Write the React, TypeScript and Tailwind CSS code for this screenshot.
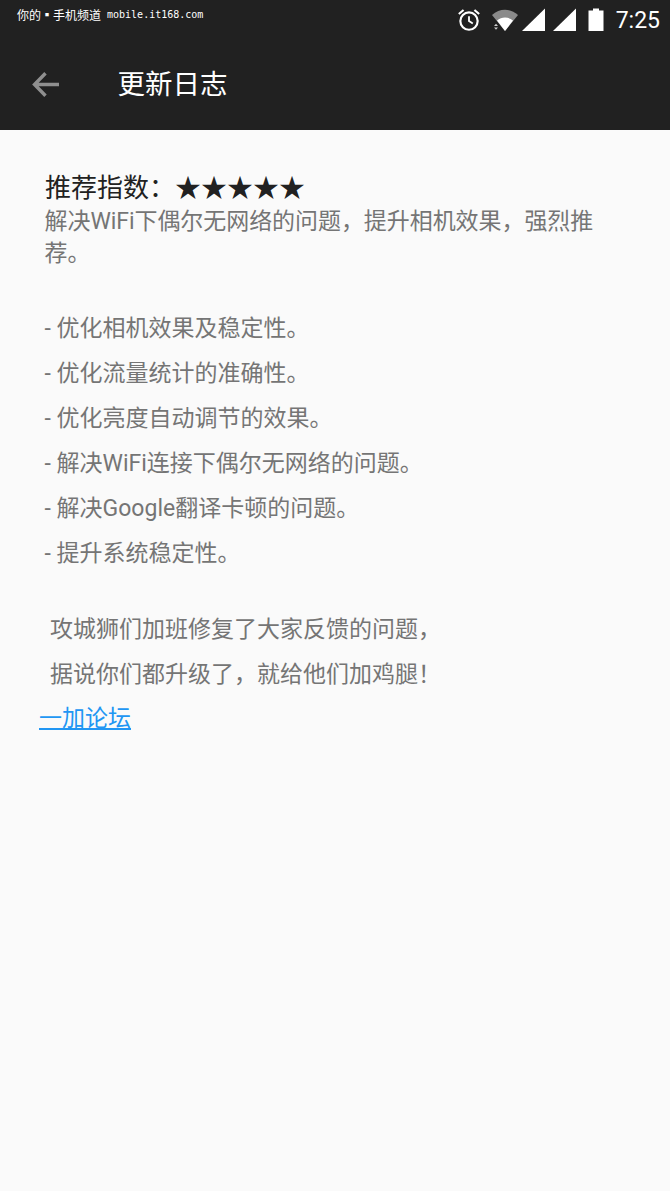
import React from "react";

const cjk = "font-['Roboto','Noto_Sans_CJK_SC',sans-serif]";

function Row({ children, cls }: { children: React.ReactNode; cls?: string }) {
  return <p className={`h-[45px] leading-[45px] whitespace-pre ${cls ?? ""}`}>{children}</p>;
}

export default function App() {
  return (
    <div className={`w-[670px] h-[1191px] bg-[#fafafa] flex flex-col overflow-hidden ${cjk}`}>
      <header className="h-[130px] bg-[#212121] shrink-0 flex flex-col">
        <div className="h-[40px] flex items-start justify-between">
          <div className="pl-[17px] pt-[6px] flex items-center h-[16px] mt-[4px] text-white text-[12px] leading-none whitespace-pre">
            <span className="font-['Noto_Sans_CJK_SC',sans-serif]">你的▪手机频道</span>
            <span className="ml-[6px] font-['DejaVu_Sans_Mono',monospace] text-[10px]">mobile.it168.com</span>
          </div>
          <div className="flex items-center h-[40px] text-white">
            <svg width="26" height="26" viewBox="0 0 24 24" fill="none" stroke="#fff" strokeWidth="2" className="mr-[9px]">
              <circle cx="12" cy="13" r="8" />
              <path d="M12 8.500V13l3.500 2.200" strokeWidth="1.700" />
              <path d="M2.600 6.500 7 2.800M21.400 6.500 17 2.800" strokeWidth="2" />
            </svg>
            <svg width="28" height="24" viewBox="0 0 28 24" className="mr-[2px]">
              <path d="M1 7C8.500 0 19.500 0 27 7L14 23Z" fill="#8a8a8a" />
              <path d="M6 12.500c4.700-4 11.300-4 16 0L14 23Z" fill="#fff" />
              <path d="M3 18 5 15.800 7 18ZM3 19.500H7L5 21.800Z" fill="#ccc" />
            </svg>
            <svg width="25" height="24" viewBox="0 0 25 24" className="mr-[6px]">
              <path d="M24 0.500V23H1Z" fill="#fff" />
            </svg>
            <svg width="25" height="24" viewBox="0 0 25 24" className="mr-[11px]">
              <path d="M24 0.500V23H1Z" fill="#fff" />
            </svg>
            <svg width="16" height="24" viewBox="0 0 16 24" className="mr-[12px]">
              <path d="M5 0.500H11V2.500H15.500V23H.5V2.500H5Z" fill="#fff" />
            </svg>
            <span className="text-[23px] leading-none mr-[10px] font-['Roboto',sans-serif] font-normal">7:25</span>
          </div>
        </div>
        <div className="flex-1 flex items-center">
          <svg width="27" height="25" viewBox="0 0 27 25" fill="none" stroke="#8f8f8f" strokeWidth="3.400" className="ml-[32px] mb-[1px]">
            <path d="M27 12.500H2.500M13.500 1.200 2.500 12.500l11 11.300" />
          </svg>
          <h1 className="ml-[58.500px] text-[27.500px] leading-none text-white font-normal mb-[1px]">更新日志</h1>
        </div>
      </header>
      <main className="flex-1 text-[23px] text-[#757575]">
        <div className="pl-[45px] pr-[60px] pt-[42px]">
          <h2 className="text-[26px] leading-[32px] text-[#212121] font-normal whitespace-pre">推荐指数：★★★★★</h2>
          <p className="leading-[32px] mt-[2px] -ml-[0.500px] tracking-[-0.060px]">解决WiFi下偶尔无网络的问题，提升相机效果，强烈推荐。</p>
        </div>
        <div className="pl-[44.500px] mt-[36px]">
          <Row>- 优化相机效果及稳定性。</Row>
          <Row>- 优化流量统计的准确性。</Row>
          <Row>- 优化亮度自动调节的效果。</Row>
          <Row>- 解决WiFi连接下偶尔无网络的问题。</Row>
          <Row>- 解决Google翻译卡顿的问题。</Row>
          <Row>- 提升系统稳定性。</Row>
        </div>
        <div className="pl-[50px] mt-[31px]">
          <Row>攻城狮们加班修复了大家反馈的问题，</Row>
          <Row>据说你们都升级了，就给他们加鸡腿！</Row>
        </div>
        <a href="#" className="ml-[39px] -mt-px block w-fit leading-[45px] text-[#2196f3] underline">一加论坛</a>
      </main>
    </div>
  );
}
